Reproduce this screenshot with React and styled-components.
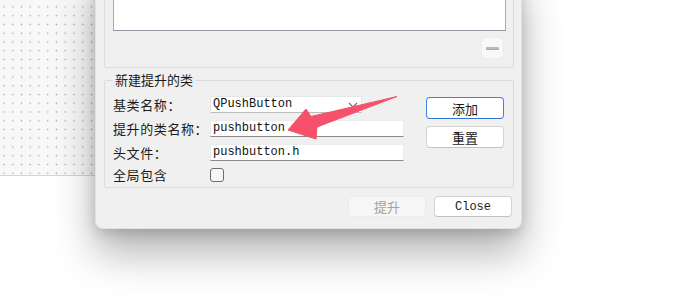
import React from "react";
import styled, { createGlobalStyle } from "styled-components";

const Global = createGlobalStyle`
  html, body { margin: 0; padding: 0; background: #ffffff; overflow: hidden; }
  * { box-sizing: border-box; }
`;

const CJK = `"Noto Sans CJK SC", "Noto Sans", sans-serif`;
const MONO = `"Liberation Mono", "DejaVu Sans Mono", monospace`;

const Desktop = styled.div`
  position: relative;
  width: 692px;
  height: 295px;
  overflow: hidden;
  background: #ffffff;
`;

const Canvas = styled.div`
  width: 320px;
  height: 176px;
  background-color: #f8f8f8;
  background-image: radial-gradient(circle, #a9a9a9 0.75px, transparent 1.05px);
  background-size: 8.75px 8.75px;
  background-position: -0.4px 2.6px;
  border-bottom: 1px solid #d6d6d6;
`;

const Dialog = styled.div`
  position: absolute;
  left: 95px;
  top: -30px;
  width: 427px;
  padding: 10px 9px 11px 8px;
  background: #f0f0f0;
  border-radius: 0 0 8px 8px;
  border: 1px solid #e2e2e2;
  border-top: none;
  box-shadow: 0 24px 42px rgba(0, 0, 0, 0.3), 0 4px 14px rgba(0, 0, 0, 0.16);
  display: flex;
  flex-direction: column;
  font-family: ${CJK};
`;

const GroupBox = styled.div`
  position: relative;
  width: 410px;
  flex: none;
  border: 1px solid #dcdcdc;
  border-radius: 2px;
  margin-top: ${(p) => p.$mt || 0}px;
`;

const GroupTitle = styled.span`
  position: absolute;
  left: 8px;
  top: -10px;
  padding: 0 2px;
  background: #f0f0f0;
  font-size: 13px;
  line-height: 18px;
  color: #1b1b1b;
`;

const ListPanel = styled.div`
  display: flex;
  flex-direction: column;
  align-items: flex-end;
  padding: 7px 7px 8px 8px;
`;

const ListWidget = styled.div`
  width: 100%;
  height: 43px;
  background: #ffffff;
  border: 1px solid #a3abb6;
  border-bottom-color: #8f97a2;
`;

const MinusButton = styled.div`
  width: 23px;
  height: 22px;
  margin-top: 6px;
  margin-right: 2px;
  background: #f8f8f8;
  border: 1px solid #ebebeb;
  border-radius: 4px;
  display: flex;
  align-items: center;
  justify-content: center;
`;

const MinusBar = styled.span`
  width: 13px;
  height: 3px;
  background: #b9b9b9;
  border-radius: 1px;
  border-bottom: 1px solid #a8a8a8;
`;

const GroupBody = styled.div`
  display: flex;
  justify-content: space-between;
  padding: 15px 9px 7px 8px;
`;

const Form = styled.div`
  display: flex;
  flex-direction: column;
`;

const FieldGrid = styled.div`
  display: grid;
  grid-template-columns: 97px auto;
  grid-template-rows: 17px 17px 17px;
  row-gap: 7px;
  align-items: center;
`;

const Label = styled.span`
  font-size: 13px;
  line-height: 17px;
  letter-spacing: 0.6px;
  color: #1b1b1b;
  white-space: nowrap;
`;

const Combo = styled.div`
  width: 152px;
  height: 17px;
  background: #ffffff;
  border: 1px solid #e6e6e6;
  border-bottom-color: #bcbcbc;
  display: flex;
  align-items: center;
  justify-content: space-between;
  padding: 0 3px 0 2px;
`;

const LineEdit = styled.div`
  width: 194px;
  height: 17px;
  background: #ffffff;
  border: 1px solid #ececec;
  border-bottom-color: #8a8a8a;
  display: flex;
  align-items: center;
  padding-left: 2px;
`;

const FieldText = styled.span`
  font-family: ${MONO};
  font-size: 12px;
  line-height: 15px;
  color: #111;
  white-space: nowrap;
`;

const CheckRow = styled.div`
  display: grid;
  grid-template-columns: 97px auto;
  align-items: center;
  margin-top: 5px;
  height: 14px;
`;

const CheckBox = styled.span`
  width: 14px;
  height: 14px;
  border: 1px solid #6e6e6e;
  border-radius: 3px;
  background: #f6f6f6;
`;

const SideButtons = styled.div`
  display: flex;
  flex-direction: column;
  gap: 7px;
  padding-top: 1px;
`;

const Button = styled.div`
  width: 78px;
  height: ${(p) => p.$h || 22}px;
  display: flex;
  align-items: center;
  justify-content: center;
  border-radius: 4px;
  background: ${(p) => (p.$disabled ? "#f6f6f6" : "#ffffff")};
  border: 1px solid
    ${(p) => (p.$default ? "#3d86df" : p.$disabled ? "#ececec" : "#d4d4d4")};
  border-bottom-color: ${(p) =>
    p.$default ? "#2f75cf" : p.$disabled ? "#ececec" : "#c2c2c2"};
  font-family: ${(p) => (p.$mono ? MONO : CJK)};
  font-size: ${(p) => (p.$mono ? 12 : 13)}px;
  color: ${(p) => (p.$disabled ? "#a2a2a2" : "#1b1b1b")};
`;

const Footer = styled.div`
  display: flex;
  justify-content: flex-end;
  gap: 8px;
  margin-top: 8px;
`;

const ArrowLayer = styled.svg`
  position: absolute;
  left: 0;
  top: 0;
  pointer-events: none;
`;

function Chevron() {
  return (
    <svg width="10" height="6" viewBox="0 0 10 6">
      <path d="M1 1 L5 5 L9 1" fill="none" stroke="#6a6a6a" strokeWidth="1.1" />
    </svg>
  );
}

export default function App() {
  return (
    <Desktop>
      <Global />
      <Canvas />
      <Dialog>
        <GroupBox>
          <ListPanel>
            <ListWidget />
            <MinusButton>
              <MinusBar />
            </MinusButton>
          </ListPanel>
        </GroupBox>
        <GroupBox $mt={12}>
          <GroupTitle>新建提升的类</GroupTitle>
          <GroupBody>
            <Form>
              <FieldGrid>
                <Label>基类名称：</Label>
                <Combo>
                  <FieldText>QPushButton</FieldText>
                  <Chevron />
                </Combo>
                <Label>提升的类名称：</Label>
                <LineEdit>
                  <FieldText>pushbutton</FieldText>
                </LineEdit>
                <Label>头文件：</Label>
                <LineEdit>
                  <FieldText>pushbutton.h</FieldText>
                </LineEdit>
              </FieldGrid>
              <CheckRow>
                <Label>全局包含</Label>
                <CheckBox />
              </CheckRow>
            </Form>
            <SideButtons>
              <Button $default>添加</Button>
              <Button>重置</Button>
            </SideButtons>
          </GroupBody>
        </GroupBox>
        <Footer>
          <Button $disabled $h={21}>提升</Button>
          <Button $mono $h={21}>Close</Button>
        </Footer>
      </Dialog>
      <ArrowLayer width="692" height="295" viewBox="0 0 692 295">
        <polygon
          points="288,130 306,109 311,116.5 397,96.5 317,127 316,139"
          fill="#f7506b"
          stroke="#f7506b"
          strokeWidth="1"
          strokeLinejoin="round"
        />
      </ArrowLayer>
    </Desktop>
  );
}
